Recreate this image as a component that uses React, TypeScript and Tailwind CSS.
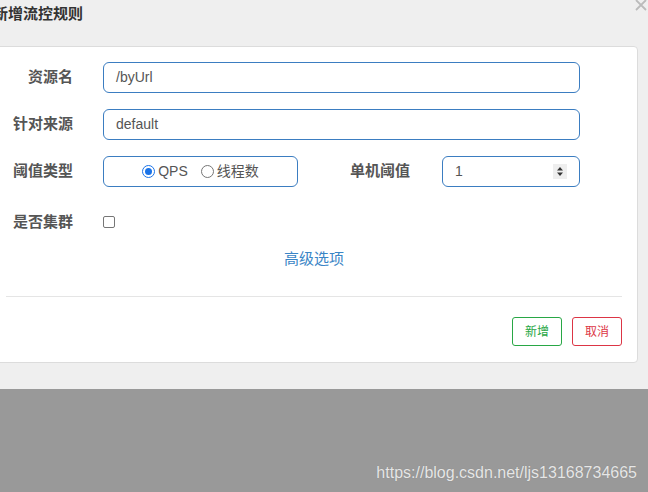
export default function App() {
  const font = { fontFamily: '"Liberation Sans", "Noto Sans CJK SC", sans-serif' }
  return (
    <div className="flex h-[492px] w-[648px] flex-col overflow-hidden bg-[#999999]" style={font}>
      <div className="h-[389px] shrink-0 bg-[#efefef]">
        <div className="relative flex h-[46px] items-start">
          <h4 className="ml-[-7px] mt-[4px] text-[15px] font-bold leading-[20px] text-[#333]">新增流控规则</h4>
          <svg className="absolute right-[1px] top-[-1px] size-[12px] text-[#bbb]" viewBox="0 0 12 12">
            <path d="M1 1 L11 11 M11 1 L1 11" stroke="currentColor" strokeWidth="1.8" />
          </svg>
        </div>
        <div className="ml-[-10px] h-[317px] w-[648px] rounded-[4px] border border-[#dcdcdc] bg-white pt-[15px]">
          <div className="flex flex-col gap-[16px] pl-[10px]">
            <Row label="资源名">
              <div className="flex h-[31px] w-[477px] items-center rounded-[6px] border border-[#3b7dc1] px-[12px] text-[14px] text-[#555]">/byUrl</div>
            </Row>
            <Row label="针对来源">
              <div className="flex h-[31px] w-[477px] items-center rounded-[6px] border border-[#3b7dc1] px-[12px] text-[14px] text-[#555]">default</div>
            </Row>
            <div className="flex items-center">
              <Label text="阈值类型" />
              <div className="flex h-[31px] w-[195px] items-center justify-center gap-[3px] rounded-[6px] border border-[#3b7dc1] text-[14px] text-[#555]">
                <span className="grid size-[13px] place-items-center rounded-full border border-[#1a73e8]">
                  <span className="size-[7px] rounded-full bg-[#1a73e8]" />
                </span>
                <span>QPS</span>
                <span className="ml-[10px] size-[13px] rounded-full border border-[#767676]" />
                <span>线程数</span>
              </div>
              <span className="ml-[52px] w-[61px] text-[15px] font-bold text-[#555]">单机阈值</span>
              <div className="ml-[31px] flex h-[31px] w-[138px] items-center justify-between rounded-[6px] border border-[#3b7dc1] pl-[12px] pr-[12px] text-[14px] text-[#555]">
                <span>1</span>
                <svg className="h-[15px] w-[14px] bg-[#eee]" viewBox="0 0 14 15">
                  <path d="M7 3 L10 6.5 L4 6.5 Z M7 12 L10 8.5 L4 8.5 Z" fill="#333" />
                </svg>
              </div>
            </div>
            <div className="mt-[8px] flex items-center">
              <Label text="是否集群" />
              <span className="size-[12px] rounded-[2px] border border-[#767676]" />
            </div>
          </div>
          <div className="mt-[14px] text-center text-[15px] text-[#3a85c6]">高级选项</div>
          <div className="ml-[15px] mr-[15px] mt-[26px] border-t border-[#e5e5e5]" />
          <div className="mr-[15px] mt-[20px] flex justify-end gap-[10px]">
            <button className="h-[29px] w-[50px] rounded-[3px] border border-[#28a745] bg-white text-[12px] text-[#28a745]">新增</button>
            <button className="h-[29px] w-[50px] rounded-[3px] border border-[#dc3545] bg-white text-[12px] text-[#dc3545]">取消</button>
          </div>
        </div>
      </div>
      <div className="flex flex-1 items-end justify-end pb-[7px] pr-[11px]">
        <span className="text-[16px] text-[#e6e6e6] [text-shadow:0_0_1px_rgba(0,0,0,0.2)]">https://blog.csdn.net/ljs13168734665</span>
      </div>
    </div>
  )
}

function Label({ text }: { text: string }) {
  return <span className="w-[102px] shrink-0 pr-[30px] text-right text-[15px] font-bold text-[#555]">{text}</span>
}

function Row({ label, children }: { label: string; children: React.ReactNode }) {
  return (
    <div className="flex items-center">
      <Label text={label} />
      {children}
    </div>
  )
}
